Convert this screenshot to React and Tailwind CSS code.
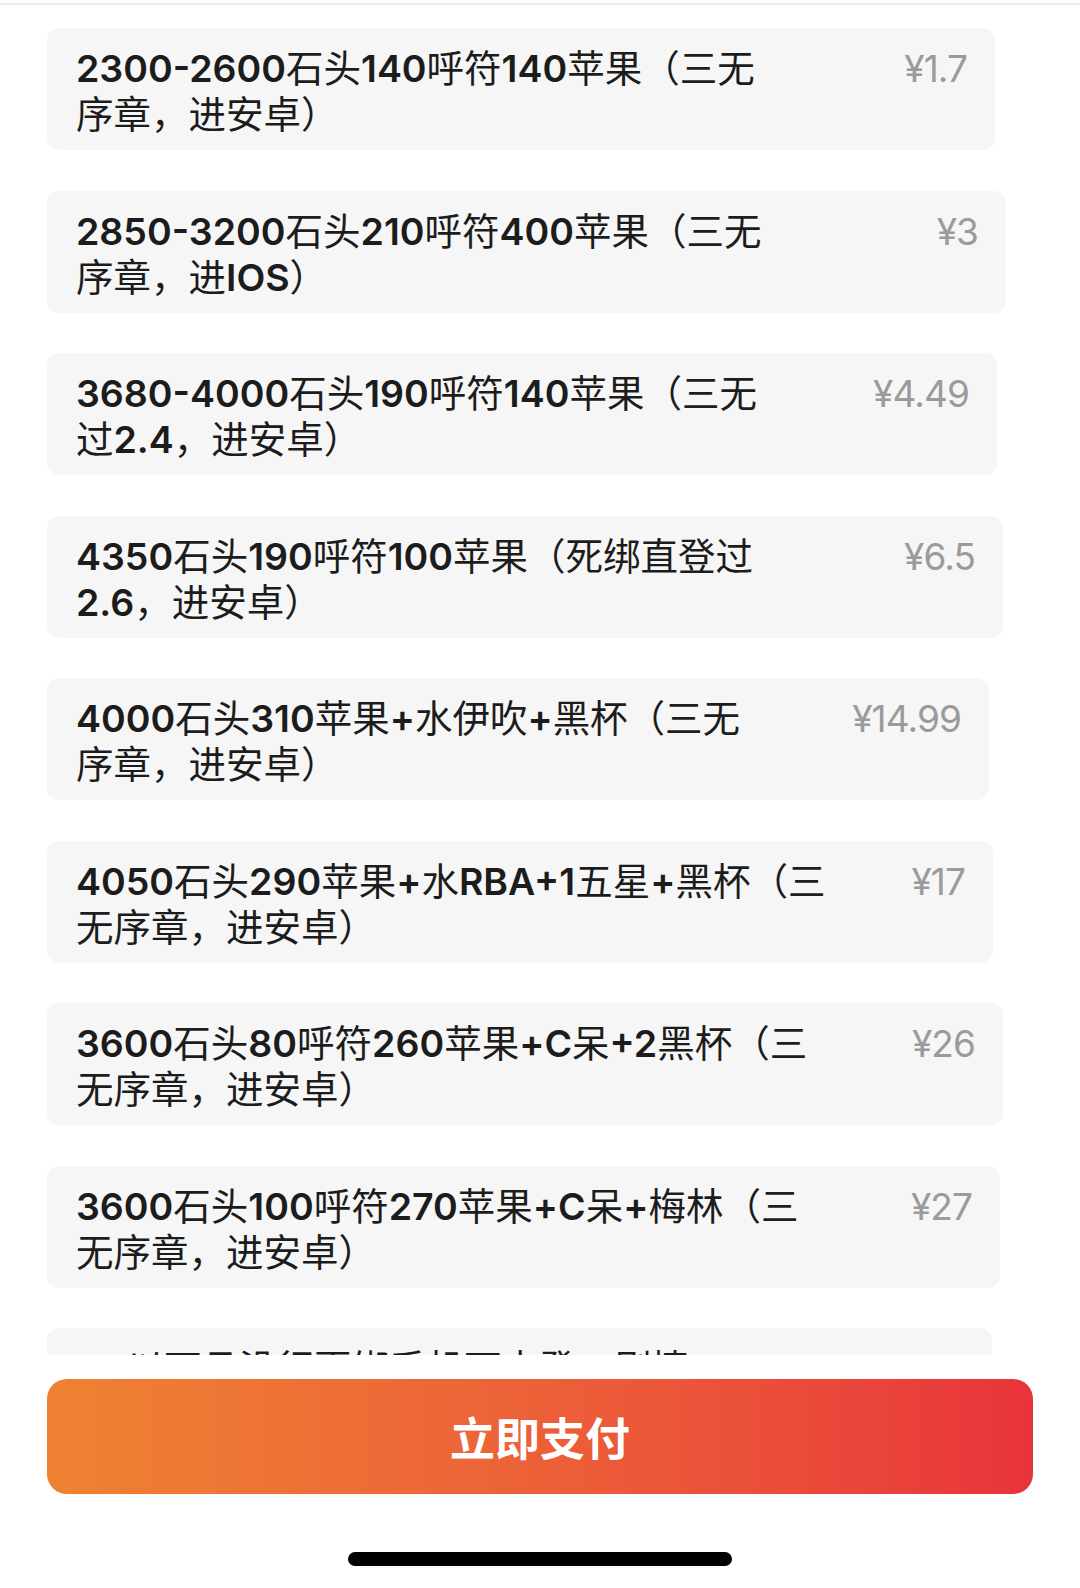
const items = [
  { id: 1, w: 'w-[948px]', title: '2300-2600石头140呼符140苹果（三无\n序章，进安卓）', price: '¥1.7' },
  { id: 2, w: 'w-[959px]', title: '2850-3200石头210呼符400苹果（三无\n序章，进IOS）', price: '¥3' },
  { id: 3, w: 'w-[950px]', title: '3680-4000石头190呼符140苹果（三无\n过2.4，进安卓）', price: '¥4.49' },
  { id: 4, w: 'w-[956px]', title: '4350石头190呼符100苹果（死绑直登过\n2.6，进安卓）', price: '¥6.5' },
  { id: 5, w: 'w-[942px]', title: '4000石头310苹果+水伊吹+黑杯（三无\n序章，进安卓）', price: '¥14.99' },
  { id: 6, w: 'w-[946px]', title: '4050石头290苹果+水RBA+1五星+黑杯（三\n无序章，进安卓）', price: '¥17' },
  { id: 7, w: 'w-[956px]', title: '3600石头80呼符260苹果+C呆+2黑杯（三\n无序章，进安卓）', price: '¥26' },
  { id: 8, w: 'w-[953px]', title: '3600石头100呼符270苹果+C呆+梅林（三\n无序章，进安卓）', price: '¥27' },
  { id: 9, w: 'w-[945px]', title: '++以下且没行更绑手机可未登，剧情', price: '¥100' },
];

// latin runs are semibold, CJK stays regular (like the iOS rendering)
function Title({ text }) {
  const parts = text.split(/([\x21-\x7e]+)/);
  return (
    <div className="whitespace-pre-line text-[37.5px] leading-[46px] text-[#1c1c1c] font-['Inter','Noto_Sans_CJK_SC',sans-serif]">
      {parts.map((p, i) =>
        /^[\x21-\x7e]+$/.test(p) ? <span key={i} className="font-semibold">{p}</span> : p
      )}
    </div>
  );
}

function ItemCard({ item }) {
  return (
    <div className={`${item.w} h-[122px] shrink-0 flex items-start justify-between rounded-[12px] bg-[#f6f6f6] pl-[29px] pr-[28px] pt-[18px]`}>
      <Title text={item.title} />
      <div className="text-[37px] leading-[46px] tracking-tight text-[#9b9b9b] font-['Inter',sans-serif]">
        {item.price}
      </div>
    </div>
  );
}

export default function App() {
  return (
    <div className="h-[1588px] w-[1080px] flex flex-col bg-white overflow-hidden">
      <div className="h-[3px] shrink-0" />
      <div className="h-[2px] shrink-0 bg-[#ececec]" />

      <div className="h-[1350px] shrink-0 overflow-hidden pl-[47px] pt-[23px] flex flex-col gap-[40.5px]">
        {items.map((item) => (
          <ItemCard key={item.id} item={item} />
        ))}
      </div>

      <div className="pt-[24px] pl-[47px]">
        <button className="w-[986px] h-[115px] rounded-[20px] bg-gradient-to-r from-[#ee8232] to-[#e8333b] text-white text-[45px] leading-none font-bold font-['Noto_Sans_CJK_SC',sans-serif]">
          立即支付
        </button>
      </div>

      <div className="flex justify-center pt-[58px]">
        <div className="w-[384px] h-[14px] rounded-full bg-black" />
      </div>
    </div>
  );
}
